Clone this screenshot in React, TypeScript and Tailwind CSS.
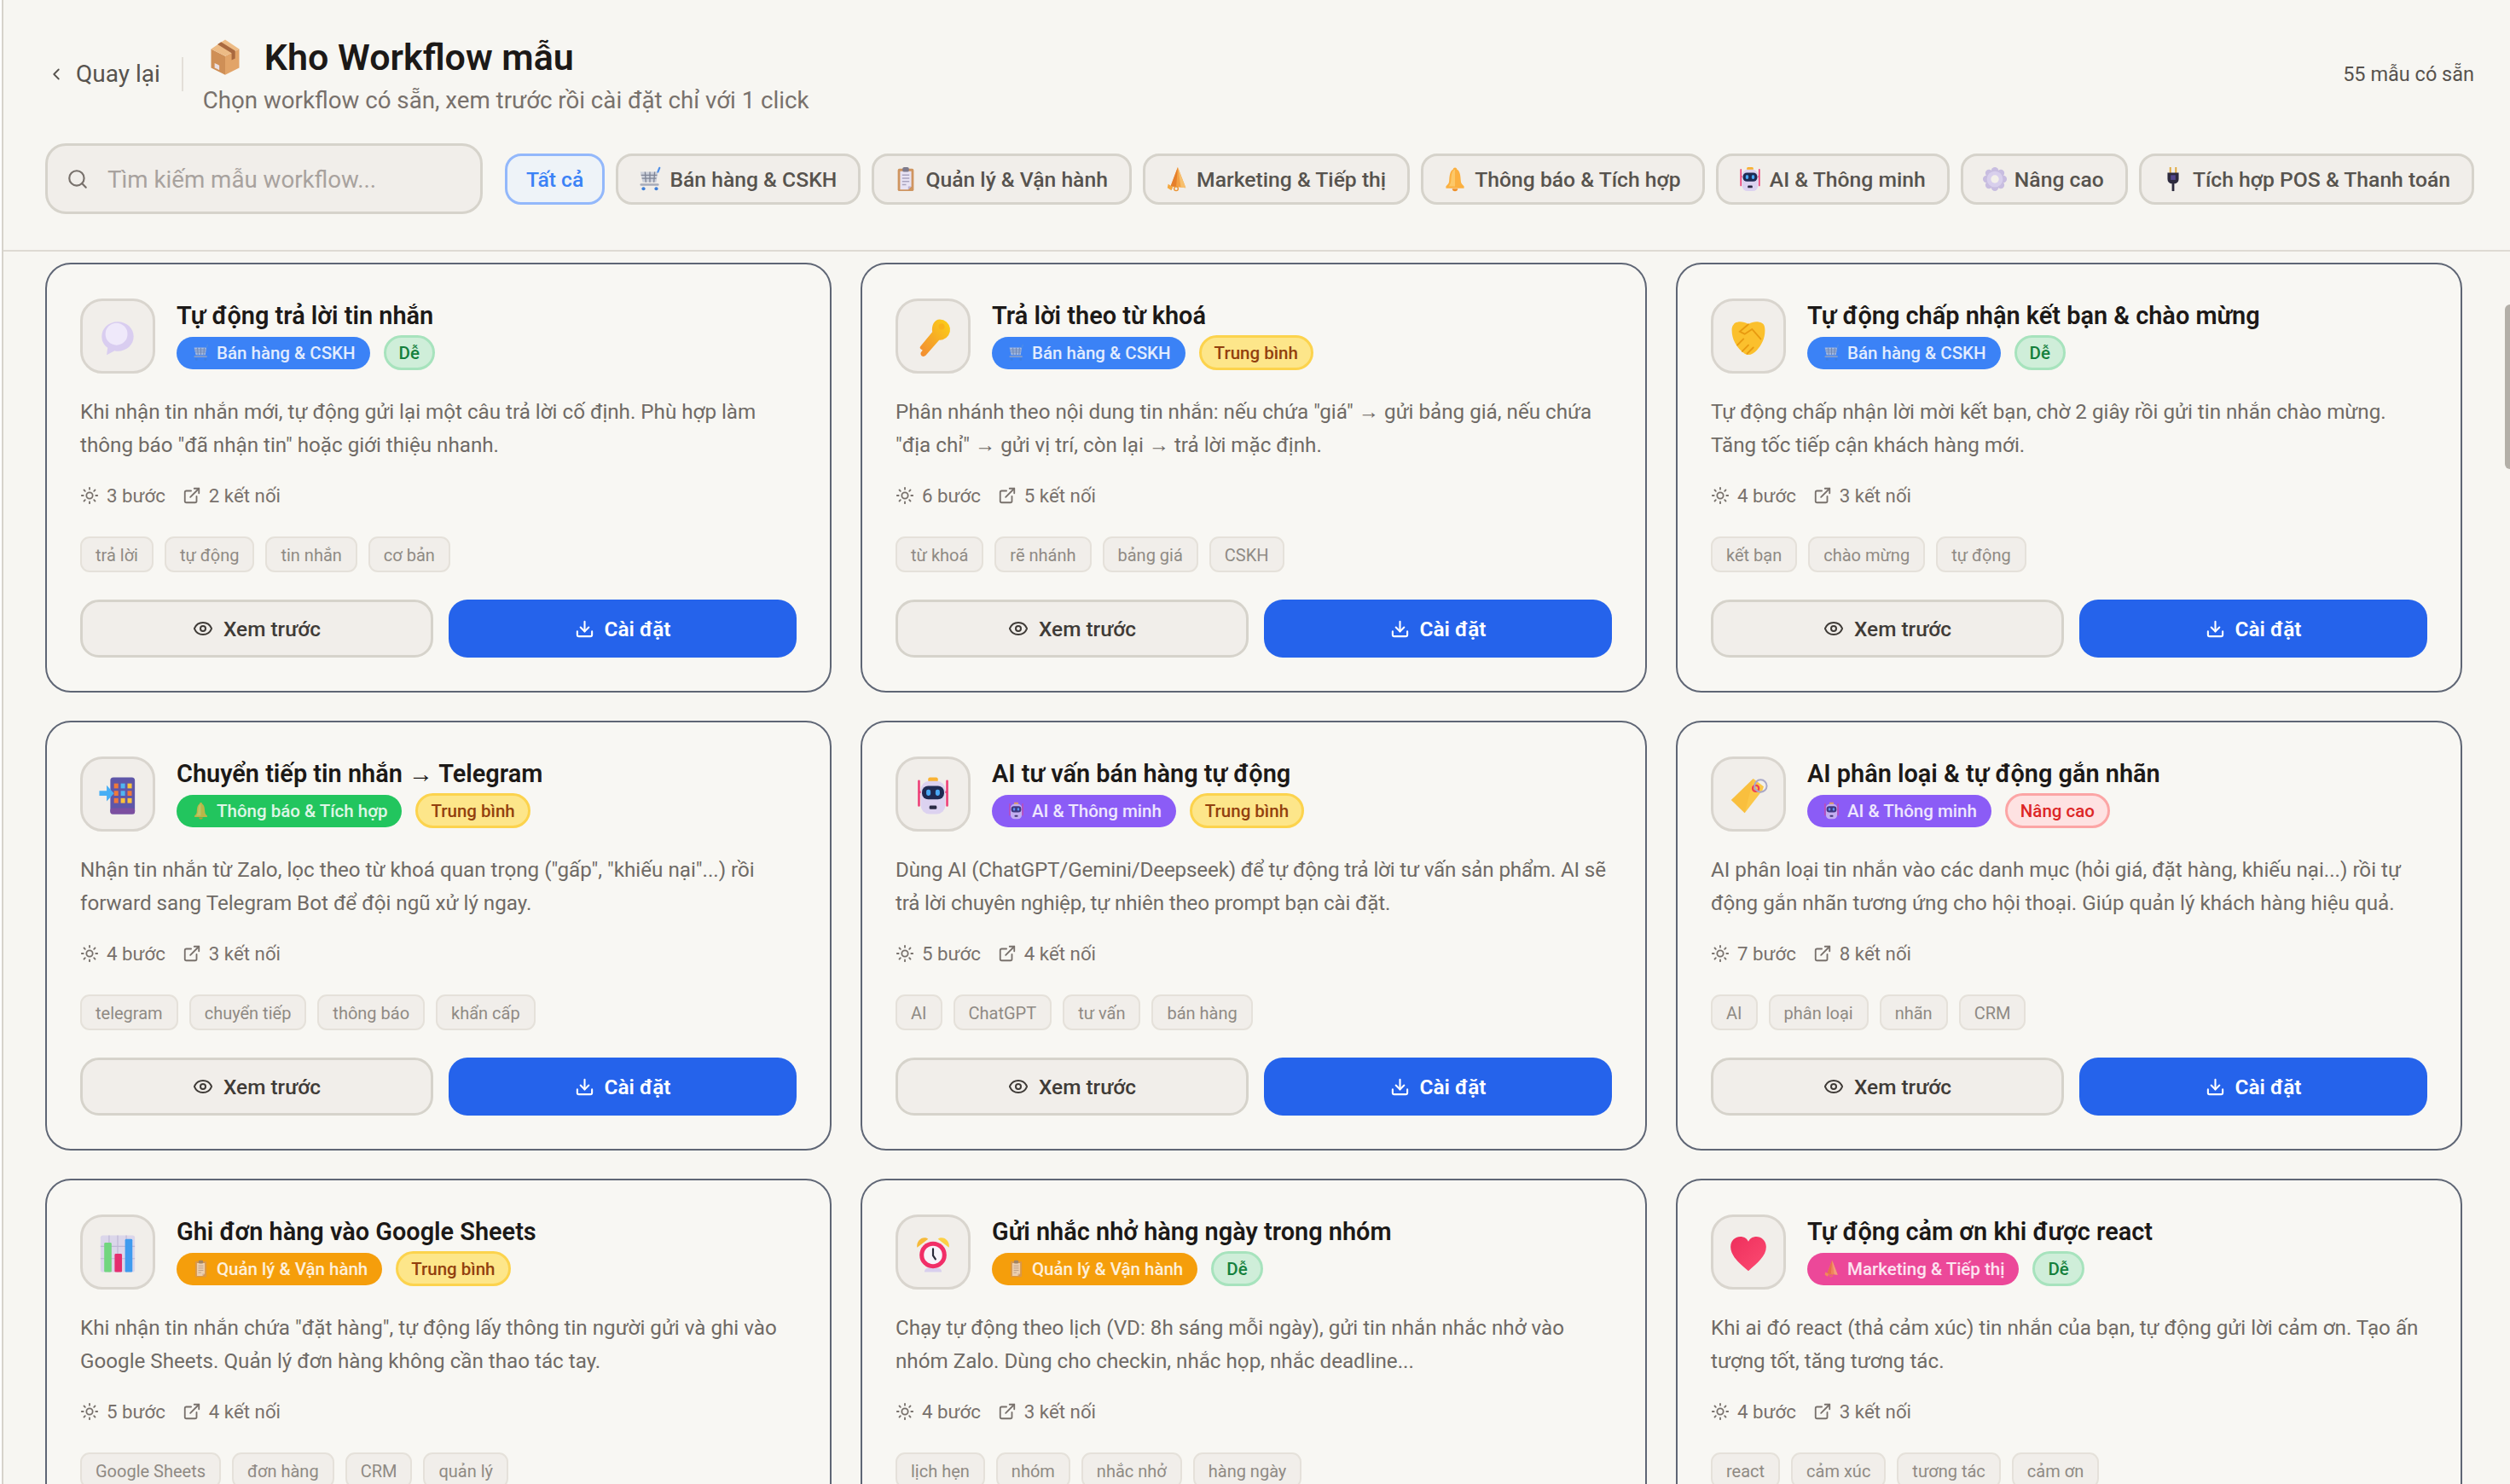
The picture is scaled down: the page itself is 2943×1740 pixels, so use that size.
import { ChevronLeft, Search, Sun, ExternalLink, Eye, Download } from 'lucide-react';

type EmojiName =
    | 'package' | 'cart' | 'clipboard' | 'megaphone' | 'bell' | 'robot' | 'gear' | 'plug'
    | 'bubble' | 'key' | 'handshake' | 'phone' | 'tag' | 'chart' | 'clock' | 'heart';

const Emoji = ({ name, size }: { name: EmojiName; size: number }) => {
    const art: Record<EmojiName, React.ReactNode> = {
        package: (
            <>
                <path d="M4 9l12 6v16L4 25z" fill="#cf8f56" />
                <path d="M28 9l-12 6v16l12-6z" fill="#e2a468" />
                <path d="M16 1l12 8-12 6L4 9z" fill="#edbb85" />
                <path d="M9.5 5l12 7.5v6l3-1.5v-6.500L12.500 3z" fill="#a9693f" />
                <path d="M7 21l4 2v4l-4-2z" fill="#eadfe0" />
            </>
        ),
        cart: (
            <>
                <path d="M4 7h22l-2 13H7z" fill="#ccd0da" />
                <path d="M5 11h20M6 15h18M10 7l1 13M16 7v13M22 7l-1 13" stroke="#7f8596" strokeWidth="1.400" fill="none" />
                <path d="M26 7l2-5" stroke="#4f8fe8" strokeWidth="2.400" strokeLinecap="round" />
                <path d="M5 23h21" stroke="#a6abb8" strokeWidth="2.600" strokeLinecap="round" />
                <circle cx="8" cy="28" r="2.200" fill="#3f7fd8" />
                <circle cx="24" cy="28" r="2.200" fill="#3f7fd8" />
            </>
        ),
        clipboard: (
            <>
                <rect x="6" y="3" width="20" height="28" rx="2" fill="#cf9560" />
                <path d="M9 6h14v19l-4 4H9z" fill="#e8e3f3" />
                <path d="M23 25h-4v4z" fill="#b9b0d2" />
                <rect x="12" y="1" width="8" height="6" rx="2" fill="#7d7a8c" />
                <path d="M11.500 11h9M11.500 15h9M11.500 19h9M11.500 23h5" stroke="#a9a4c0" strokeWidth="1.500" />
            </>
        ),
        megaphone: (
            <>
                <path d="M17 1L8 25l19 2z" fill="#f3a043" />
                <path d="M17 1L8 25l7 .700z" fill="#e57f2c" />
                <path d="M17 1l10 26-6-.600z" fill="#f7bf6d" />
                <path d="M5 22l6 4-2 4-5-3z" fill="#f5a83f" />
                <circle cx="15" cy="28" r="2.500" fill="none" stroke="#eb9433" strokeWidth="1.500" />
            </>
        ),
        bell: (
            <>
                <path d="M16 1.500c-1.500 0-2.500 1-2.500 2.600C9.500 6 9.200 12 8.700 18.500c-.2 3-2 4.500-4 6.500v2.500h22.600V25c-2-2-3.800-3.500-4-6.500C22.800 12 22.500 6 18.500 4.100c0-1.600-1-2.600-2.500-2.600z" fill="#fbb040" />
                <path d="M16 4c-4 1-4.500 7-5 14-.2 3-1.600 5-3 7h8z" fill="#fcc868" />
                <path d="M12.500 28h7c0 2-1.500 3.200-3.500 3.200s-3.500-1.200-3.500-3.200z" fill="#ee8f28" />
            </>
        ),
        robot: (
            <>
                <path d="M4.500 4v20M27.500 4v20" stroke="#ee3f78" strokeWidth="1.800" strokeLinecap="round" />
                <path d="M4.500 13H7M27.500 13H25" stroke="#ee3f78" strokeWidth="1.800" />
                <rect x="12" y="1" width="8" height="4" rx="1.500" fill="#f9b233" />
                <rect x="6" y="4" width="20" height="27" rx="7" fill="#dcd2f0" />
                <rect x="7" y="8" width="18" height="11" rx="5" fill="#1f2a52" />
                <rect x="10.500" y="11" width="3.500" height="5" rx="1.500" fill="#4aa8f5" />
                <rect x="18" y="11" width="3.500" height="5" rx="1.500" fill="#4aa8f5" />
                <rect x="13" y="24" width="6" height="3" rx="1" fill="#2a2a44" />
            </>
        ),
        gear: (
            <>
                {[0, 45, 90, 135, 180, 225, 270, 315].map((a) => (
                    <circle key={a} cx="16" cy="5.500" r="4.500" fill="#c8bde0" transform={`rotate(${a} 16 16)`} />
                ))}
                <circle cx="16" cy="16" r="10" fill="#d8cfec" />
                <circle cx="16" cy="16" r="5" fill="#f3f0ea" />
            </>
        ),
        plug: (
            <>
                <path d="M12.500 1v8M19.500 1v8" stroke="#e0a83a" strokeWidth="2" />
                <path d="M9 8h14v8c0 3-2 5-4 5.500h-6C11 21 9 19 9 16z" fill="#2d2a3e" />
                <path d="M13 11h6v6h-6z" fill="#52468c" />
                <path d="M16 21v10" stroke="#2d2a3e" strokeWidth="3" />
            </>
        ),
        bubble: (
            <>
                <path d="M16 3C8.500 3 3 8.500 3 15c0 4 1.800 7 4.800 9.200L7 30l6.500-3.400c.8.200 1.700.400 2.500.400 7.500 0 13-5.500 13-12S23.500 3 16 3z" fill="#d9cdf0" />
                <circle cx="15" cy="13" r="9" fill="#efe9fa" />
            </>
        ),
        key: (
            <>
                <defs>
                    <linearGradient id="keyFill" x1="1" y1="0" x2="0" y2="1">
                        <stop offset="0" stopColor="#fcd116" />
                        <stop offset="1" stopColor="#f28a33" />
                    </linearGradient>
                </defs>
                <path d="M21.500 1a8.500 8.500 0 0 1 2.500 16.600c-1 .3-2 .4-3 .3L10 30.500c-1 1-2.400 1-3.300.2-.8-.7-1-1.800-.6-2.700l1.400-1.800-1.700-1.200c-.6-.5-.6-1.400 0-2l9.600-11.700C14.600 6 17 1 21.500 1z" fill="url(#keyFill)" />
                <circle cx="23" cy="7" r="2.400" fill="#f9b21a" />
            </>
        ),
        handshake: (
            <>
                <path d="M5 4c3-1.500 7-1.500 11 1 4-2.500 8-2.500 11-1 2 1 2.500 3 2.500 6 0 7-3 12-6.500 16-3 3.500-7 5-10 3-5.500-3.500-10.500-11-10.500-19 0-3 .5-4 2.500-6z" fill="#fbc02d" />
                <path d="M16 5l-7 6 4 2 6-4 7 8M11 27l5-5M15 29l5-5M7 22l5-5" stroke="#e89a10" strokeWidth="1.300" fill="none" strokeLinecap="round" />
            </>
        ),
        phone: (
            <>
                <rect x="10" y="1" width="20" height="30" rx="2.500" fill="#5f56a8" />
                <rect x="10" y="26" width="20" height="5" rx="2" fill="#7c4fa0" />
                <path d="M13 6h3.500v4H13z" fill="#f0793a" />
                <path d="M18.500 6H22v4h-3.500z" fill="#4fb6f0" />
                <path d="M24 6h3.500v4H24z" fill="#fcc23a" />
                <path d="M13 12h3.500v4H13z" fill="#f0793a" />
                <path d="M18.500 12H22v4h-3.500z" fill="#4fb6f0" />
                <path d="M24 12h3.500v4H24z" fill="#f0793a" />
                <path d="M13 18h3.500v4H13z" fill="#f0793a" />
                <path d="M18.500 18H22v4h-3.500z" fill="#fcc23a" />
                <path d="M24 18h3.500v4H24z" fill="#fcc23a" />
                <path d="M1 12h6V7.500L13 14l-6 6.500V16H1z" fill="#47aff5" />
            </>
        ),
        tag: (
            <>
                <path d="M20 2l8.500 6.500-1 3L13 30 2 19.500z" fill="#fbc748" />
                <path d="M20 2L2 19.500 13 30z" fill="#f7b733" opacity="0.500" />
                <circle cx="22" cy="10" r="2.500" fill="none" stroke="#ee3f55" strokeWidth="1.600" />
                <circle cx="26" cy="8" r="5" fill="none" stroke="#a9a8c8" strokeWidth="1.400" />
            </>
        ),
        chart: (
            <>
                <rect x="2" y="1" width="28" height="30" rx="2" fill="#dbd6ea" />
                <path d="M9 1v30M16 1v30M23 1v30M2 10h28M2 20h28" stroke="#bdb7d4" strokeWidth="0.800" />
                <rect x="5" y="7" width="6" height="24" rx="1" fill="#71d67f" />
                <rect x="13.500" y="16" width="6" height="15" rx="1" fill="#e52e6f" />
                <rect x="22" y="4" width="6" height="27" rx="1" fill="#3f9bef" />
            </>
        ),
        clock: (
            <>
                <path d="M3 11C2 5 8 1 12 4z" fill="#f6ba3a" />
                <path d="M29 11c1-6-5-10-9-7z" fill="#fcd045" />
                <path d="M9 31c0-3 3-4 7-4s7 1 7 4z" fill="#d9cfee" />
                <circle cx="16" cy="17" r="11" fill="#f12e68" />
                <circle cx="16" cy="17" r="7.500" fill="#f7f4fb" />
                <path d="M16 12v5.500l2 3" stroke="#2b2b3a" strokeWidth="1.500" fill="none" strokeLinecap="round" />
            </>
        ),
        heart: (
            <>
                <defs>
                    <linearGradient id="heartFill" x1="0" y1="0" x2="1" y2="1">
                        <stop offset="0" stopColor="#ee2f5c" />
                        <stop offset="1" stopColor="#fc4b72" />
                    </linearGradient>
                </defs>
                <path d="M16 30C9 24 1.500 18 1.500 10.500 1.500 5 5.500 2 9.500 2c3 0 5.300 1.500 6.500 4 1.200-2.500 3.500-4 6.500-4 4 0 8 3 8 8.500C30.500 18 23 24 16 30z" fill="url(#heartFill)" />
            </>
        ),
    };
    return (
        <svg width={size} height={size} viewBox="0 0 32 32" className="shrink-0">
            {art[name]}
        </svg>
    );
};

const categories = {
    sales: { label: 'Bán hàng & CSKH', emoji: 'cart', color: 'bg-[#3b82f6]' },
    ops: { label: 'Quản lý & Vận hành', emoji: 'clipboard', color: 'bg-[#f59e0b]' },
    marketing: { label: 'Marketing & Tiếp thị', emoji: 'megaphone', color: 'bg-[#ec4899]' },
    notify: { label: 'Thông báo & Tích hợp', emoji: 'bell', color: 'bg-[#22c55e]' },
    ai: { label: 'AI & Thông minh', emoji: 'robot', color: 'bg-[#8b5cf6]' },
} as const;

const levels = {
    easy: { label: 'Dễ', className: 'bg-[#cfeed9] border-[#a7e3bd] text-[#15803d]' },
    medium: { label: 'Trung bình', className: 'bg-[#fde68a] border-[#fcd34d] text-[#92400e]' },
    hard: { label: 'Nâng cao', className: 'bg-[#fee2e2] border-[#fca5a5] text-[#dc2626]' },
} as const;

const filters: { label: string; emoji: EmojiName }[] = [
    { label: 'Bán hàng & CSKH', emoji: 'cart' },
    { label: 'Quản lý & Vận hành', emoji: 'clipboard' },
    { label: 'Marketing & Tiếp thị', emoji: 'megaphone' },
    { label: 'Thông báo & Tích hợp', emoji: 'bell' },
    { label: 'AI & Thông minh', emoji: 'robot' },
    { label: 'Nâng cao', emoji: 'gear' },
    { label: 'Tích hợp POS & Thanh toán', emoji: 'plug' },
];

type Template = {
    emoji: EmojiName;
    title: string;
    category: keyof typeof categories;
    level: keyof typeof levels;
    description: string;
    tight?: boolean;
    steps: number;
    links: number;
    tags: string[];
};

const templates: Template[] = [
    {
        emoji: 'bubble',
        title: 'Tự động trả lời tin nhắn',
        category: 'sales',
        level: 'easy',
        description: 'Khi nhận tin nhắn mới, tự động gửi lại một câu trả lời cố định. Phù hợp làm thông báo "đã nhận tin" hoặc giới thiệu nhanh.',
        steps: 3,
        links: 2,
        tags: ['trả lời', 'tự động', 'tin nhắn', 'cơ bản'],
    },
    {
        emoji: 'key',
        title: 'Trả lời theo từ khoá',
        category: 'sales',
        level: 'medium',
        description: 'Phân nhánh theo nội dung tin nhắn: nếu chứa "giá" → gửi bảng giá, nếu chứa "địa chỉ" → gửi vị trí, còn lại → trả lời mặc định.',
        steps: 6,
        links: 5,
        tags: ['từ khoá', 'rẽ nhánh', 'bảng giá', 'CSKH'],
    },
    {
        emoji: 'handshake',
        title: 'Tự động chấp nhận kết bạn & chào mừng',
        category: 'sales',
        level: 'easy',
        description: 'Tự động chấp nhận lời mời kết bạn, chờ 2 giây rồi gửi tin nhắn chào mừng. Tăng tốc tiếp cận khách hàng mới.',
        steps: 4,
        links: 3,
        tags: ['kết bạn', 'chào mừng', 'tự động'],
    },
    {
        emoji: 'phone',
        title: 'Chuyển tiếp tin nhắn → Telegram',
        category: 'notify',
        level: 'medium',
        description: 'Nhận tin nhắn từ Zalo, lọc theo từ khoá quan trọng ("gấp", "khiếu nại"...) rồi forward sang Telegram Bot để đội ngũ xử lý ngay.',
        steps: 4,
        links: 3,
        tags: ['telegram', 'chuyển tiếp', 'thông báo', 'khẩn cấp'],
    },
    {
        emoji: 'robot',
        title: 'AI tư vấn bán hàng tự động',
        category: 'ai',
        level: 'medium',
        description: 'Dùng AI (ChatGPT/Gemini/Deepseek) để tự động trả lời tư vấn sản phẩm. AI sẽ trả lời chuyên nghiệp, tự nhiên theo prompt bạn cài đặt.',
        // this line only just fits, keep the wrap after "AI sẽ"
        tight: true,
        steps: 5,
        links: 4,
        tags: ['AI', 'ChatGPT', 'tư vấn', 'bán hàng'],
    },
    {
        emoji: 'tag',
        title: 'AI phân loại & tự động gắn nhãn',
        category: 'ai',
        level: 'hard',
        description: 'AI phân loại tin nhắn vào các danh mục (hỏi giá, đặt hàng, khiếu nại...) rồi tự động gắn nhãn tương ứng cho hội thoại. Giúp quản lý khách hàng hiệu quả.',
        steps: 7,
        links: 8,
        tags: ['AI', 'phân loại', 'nhãn', 'CRM'],
    },
    {
        emoji: 'chart',
        title: 'Ghi đơn hàng vào Google Sheets',
        category: 'ops',
        level: 'medium',
        description: 'Khi nhận tin nhắn chứa "đặt hàng", tự động lấy thông tin người gửi và ghi vào Google Sheets. Quản lý đơn hàng không cần thao tác tay.',
        steps: 5,
        links: 4,
        tags: ['Google Sheets', 'đơn hàng', 'CRM', 'quản lý'],
    },
    {
        emoji: 'clock',
        title: 'Gửi nhắc nhở hàng ngày trong nhóm',
        category: 'ops',
        level: 'easy',
        description: 'Chạy tự động theo lịch (VD: 8h sáng mỗi ngày), gửi tin nhắn nhắc nhở vào nhóm Zalo. Dùng cho checkin, nhắc họp, nhắc deadline...',
        steps: 4,
        links: 3,
        tags: ['lịch hẹn', 'nhóm', 'nhắc nhở', 'hàng ngày'],
    },
    {
        emoji: 'heart',
        title: 'Tự động cảm ơn khi được react',
        category: 'marketing',
        level: 'easy',
        description: 'Khi ai đó react (thả cảm xúc) tin nhắn của bạn, tự động gửi lời cảm ơn. Tạo ấn tượng tốt, tăng tương tác.',
        steps: 4,
        links: 3,
        tags: ['react', 'cảm xúc', 'tương tác', 'cảm ơn'],
    },
];

const TemplateCard = ({ item }: { item: Template }) => {
    const category = categories[item.category];
    const level = levels[item.level];

    return (
        <div className="rounded-[30px] border-2 border-[#5f6675] bg-[#f8f7f3] pt-[40px] px-[39px] pb-[39px]">
            <div className="flex gap-[25px]">
                <div className="flex h-[88px] w-[88px] shrink-0 items-center justify-center rounded-[26px] border-[3px] border-[#d9d5ce] bg-[#f1eeea] pt-[3px]">
                    <Emoji name={item.emoji} size={46} />
                </div>
                <div className="min-w-0">
                    <h3 className="pt-[2px] text-[28.900px] leading-[36px] font-semibold text-[#1c1917]">{item.title}</h3>
                    <div className="mt-[5px] flex items-center gap-[16px]">
                        <span className={`flex h-[38px] items-center gap-[8px] rounded-full pl-[18px] pr-[17px] text-[20.500px] font-medium text-white/85 ${category.color}`}>
                            <span className="opacity-70">
                                <Emoji name={category.emoji} size={21} />
                            </span>
                            <span className="pt-[2px]">{category.label}</span>
                        </span>
                        <span className={`flex h-[41px] items-center rounded-full border-[3px] px-[15px] pt-[2px] text-[20.500px] font-medium ${level.className}`}>
                            {level.label}
                        </span>
                    </div>
                </div>
            </div>

            <p className={`mt-[26px] text-[24.200px] leading-[39px] text-[#6f6a65] ${item.tight ? 'tracking-[-0.170px]' : ''}`}>{item.description}</p>

            <div className="mt-[24px] flex h-[30px] items-center gap-[20px] text-[22.300px] text-[#78716c]">
                <span className="flex items-center gap-[9px]">
                    <Sun className="h-[22px] w-[22px]" strokeWidth={2} />
                    <span className="pt-[2px]">{item.steps} bước</span>
                </span>
                <span className="flex items-center gap-[9px]">
                    <ExternalLink className="h-[22px] w-[22px]" strokeWidth={2} />
                    <span className="pt-[2px]">{item.links} kết nối</span>
                </span>
            </div>

            <div className="mt-[33px] flex gap-[13px]">
                {item.tags.map((tag) => (
                    <span key={tag} className="flex h-[42px] items-center rounded-[11px] border-2 border-[#e5e1da] bg-[#f1eeea] px-[16px] pt-[2px] text-[20px] text-[#8f8a84]">
                        {tag}
                    </span>
                ))}
            </div>

            <div className="mt-[32px] flex gap-[18px]">
                <button className="flex h-[68px] flex-1 items-center justify-center gap-[12px] rounded-[22px] border-[3px] border-[#d6d3cb] bg-[#f1eeea] text-[24.400px] font-medium text-[#3f3b37]">
                    <Eye className="h-[24px] w-[24px]" strokeWidth={2} />
                    <span className="pt-[2px]">Xem trước</span>
                </button>
                <button className="flex h-[68px] flex-1 items-center justify-center gap-[12px] rounded-[22px] bg-[#2563eb] text-[24.400px] font-semibold text-white">
                    <Download className="h-[23px] w-[23px]" strokeWidth={2.200} />
                    <span className="pt-[2px]">Cài đặt</span>
                </button>
            </div>
        </div>
    );
};

export default function App() {
    return (
        <div className="relative ml-[2px] h-[1740px] overflow-hidden border-l-[2px] border-[#d6d3cb] bg-[#f7f6f2] font-[Roboto,sans-serif]">
            <header className="border-b-2 border-[#dedad3] pt-[44px] pb-[42px] pl-[49px] pr-[42px]">
                <div className="flex items-center justify-between">
                    <div className="flex items-center">
                        <button className="mb-[8px] ml-[2px] flex items-center gap-[12px] text-[28px] text-[#57534e]">
                            <ChevronLeft className="h-[22px] w-[22px]" strokeWidth={2} />
                            Quay lại
                        </button>
                        <div className="mb-[8px] ml-[25px] mr-[23px] h-[40px] w-[2px] bg-[#e3dfd8]" />
                        <div>
                            <div className="flex h-[46px] items-center pl-[4px]">
                                <Emoji name="package" size={44} />
                                <h1 className="ml-[24px] text-[43px] leading-[46px] font-semibold text-[#1c1917]">Kho Workflow mẫu</h1>
                            </div>
                            <p className="mt-[8px] text-[27.700px] leading-[40px] text-[#78716c]">Chọn workflow có sẵn, xem trước rồi cài đặt chỉ với 1 click</p>
                        </div>
                    </div>
                    <span className="mb-[6px] text-[23.500px] text-[#57534e]">55 mẫu có sẵn</span>
                </div>

                <div className="mt-[30px] flex items-center">
                    <div className="flex h-[83px] w-[513px] shrink-0 items-center gap-[22px] rounded-[24px] border-[3px] border-[#d6d3cb] bg-[#f1eeea] pl-[22px]">
                        <Search className="h-[26px] w-[26px] text-[#78716c]" strokeWidth={2} />
                        <span className="pt-[3px] text-[27.700px] text-[#a8a29e]">Tìm kiếm mẫu workflow...</span>
                    </div>
                    <div className="ml-[26px] flex flex-1 items-center justify-between">
                        <button className="flex h-[60px] items-center rounded-[19px] border-[3px] border-[#93b8fb] bg-[#eef3f8] px-[22px] pt-[3px] text-[24.700px] font-medium text-[#3b82f6]">
                            Tất cả
                        </button>
                        {filters.map((filter) => (
                            <button key={filter.label} className="flex h-[60px] items-center gap-[8px] rounded-[19px] border-[3px] border-[#d6d3cb] bg-[#f1eeea] pl-[22px] pr-[25px] text-[24.700px] font-medium text-[#57534e]">
                                <Emoji name={filter.emoji} size={30} />
                                <span className="pt-[3px]">{filter.label}</span>
                            </button>
                        ))}
                    </div>
                </div>
            </header>

            <main className="grid grid-cols-[repeat(3,922px)] gap-x-[34px] gap-y-[33px] pt-[13px] pl-[49px]">
                {templates.map((item) => (
                    <TemplateCard key={item.title} item={item} />
                ))}
            </main>

            <div className="absolute top-[357px] right-0 h-[193px] w-[6px] rounded-l-full bg-[#b3afa8]" />
        </div>
    );
}
